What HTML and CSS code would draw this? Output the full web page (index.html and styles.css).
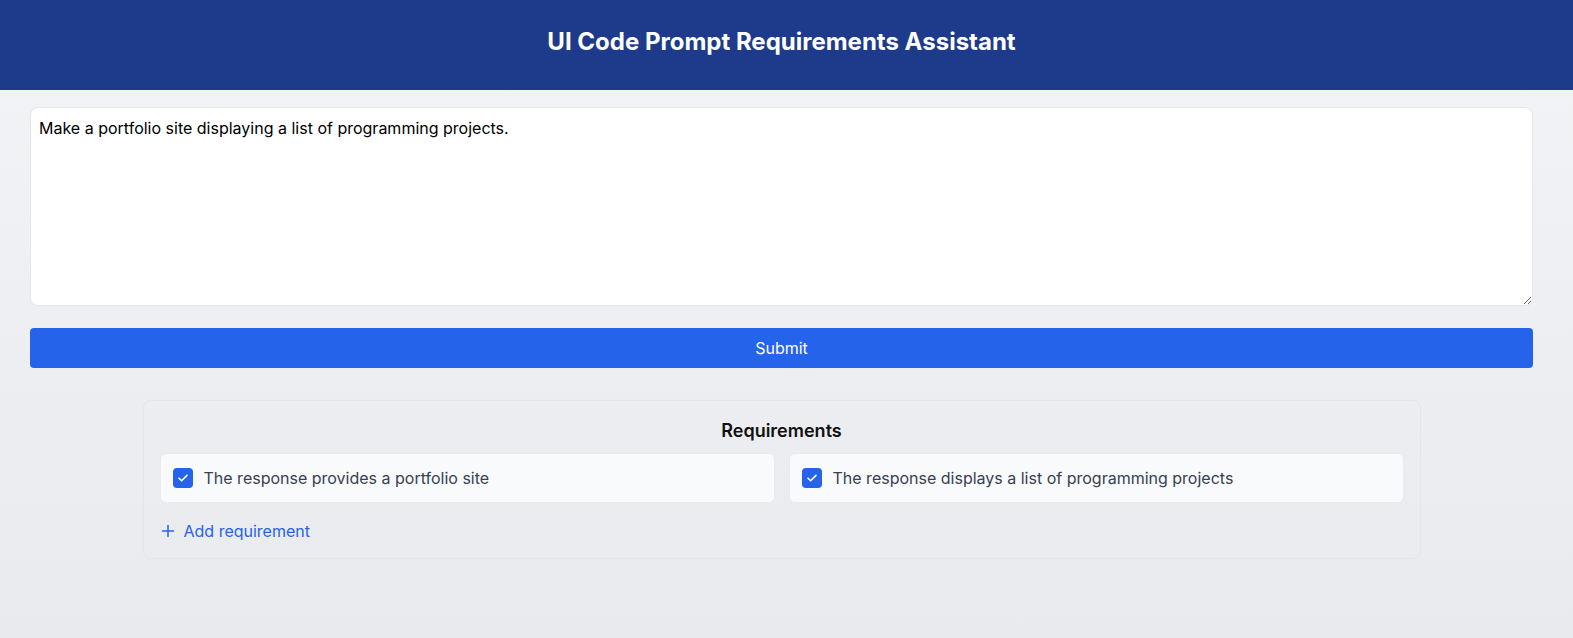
FILE: index.html
```html
<!DOCTYPE html>
<html lang="en">
<head>
<meta charset="utf-8">
<title>UI Code Prompt Requirements Assistant</title>
<link rel="stylesheet" href="styles.css">
</head>
<body>
<header class="topbar">
  <h1 class="title">UI Code Prompt Requirements Assistant</h1>
</header>
<main class="main">
  <textarea class="prompt">Make a portfolio site displaying a list of programming projects.</textarea>
  <button class="submit" type="button">Submit</button>
  <section class="card">
    <h2 class="card-title">Requirements</h2>
    <div class="req-grid">
      <label class="req">
        <span class="check"><svg viewBox="0 0 20 20" width="20" height="20"><path d="M6 10.2l2.6 2.6L14 7.4" fill="none" stroke="#fff" stroke-width="1.6" stroke-linecap="round" stroke-linejoin="round"/></svg></span>
        <span class="req-text">The response provides a portfolio site</span>
      </label>
      <label class="req">
        <span class="check"><svg viewBox="0 0 20 20" width="20" height="20"><path d="M6 10.2l2.6 2.6L14 7.4" fill="none" stroke="#fff" stroke-width="1.6" stroke-linecap="round" stroke-linejoin="round"/></svg></span>
        <span class="req-text">The response displays a list of programming projects</span>
      </label>
    </div>
    <button class="add" type="button">
      <svg viewBox="0 0 14 14" width="14" height="14"><path d="M7 1.5v11M1.5 7h11" stroke="#2563eb" stroke-width="1.5" stroke-linecap="round"/></svg>
      <span>Add requirement</span>
    </button>
  </section>
</main>
</body>
</html>
```
FILE: styles.css
```css
* { box-sizing: border-box; }
html, body { height: 100%; }
body {
  margin: 0;
  font-family: Inter, "Noto Sans", "Liberation Sans", sans-serif;
  background: linear-gradient(180deg, #f3f4f6 0%, #e9eaee 100%);
  color: #111827;
  min-height: 638px;
}
.topbar {
  height: 90px;
  background: #1e3a8a;
  display: flex;
  align-items: center;
  justify-content: center;
  padding-right: 10px;
}
.title {
  margin: 0 0 6px 0;
  color: #fff;
  font-size: 24px;
  font-weight: 700;
  line-height: 32px;
}
.main {
  padding: 16px 40px 0 30px;
  display: flex;
  flex-direction: column;
}
.prompt {
  display: block;
  width: 100%;
  height: 199px;
  margin-top: 1px;
  border: 1px solid #e3e5e9;
  border-radius: 8px;
  background: #fff;
  padding: 8px;
  font-family: Inter, "Noto Sans", sans-serif;
  font-size: 16px;
  line-height: 24px;
  color: #000;
  resize: vertical;
  outline: none;
}
.submit {
  margin-top: 22px;
  height: 40px;
  width: 100%;
  border: none;
  border-radius: 4px;
  background: #2563eb;
  color: #fff;
  font-family: Inter, "Noto Sans", sans-serif;
  font-size: 16px;
}
.card {
  margin: 32px auto 0;
  width: 1278px;
  border: 1px solid #e3e5e9;
  border-radius: 8px;
  padding: 16px 16px 15px;
}
.card-title {
  margin: 0 0 8px;
  text-align: center;
  font-size: 18px;
  font-weight: 600;
  line-height: 28px;
  color: #111;
}
.req-grid {
  display: grid;
  grid-template-columns: 1fr 1fr;
  gap: 14px;
}
.req {
  display: flex;
  align-items: center;
  gap: 11px;
  padding: 12px;
  background: #f9fafb;
  border: 1px solid #e8eaee;
  border-radius: 6px;
}
.check {
  width: 20px;
  height: 20px;
  border-radius: 4px;
  background: #2563eb;
  display: flex;
  flex: none;
}
.req-text {
  font-size: 16px;
  line-height: 24px;
  color: #374151;
}
.add {
  margin-top: 16px;
  display: flex;
  align-items: center;
  gap: 9px;
  background: none;
  border: none;
  padding: 0 0 0 1px;
  color: #2563eb;
  font-family: Inter, "Noto Sans", sans-serif;
  font-size: 16px;
  line-height: 24px;
  align-self: flex-start;
}
```
